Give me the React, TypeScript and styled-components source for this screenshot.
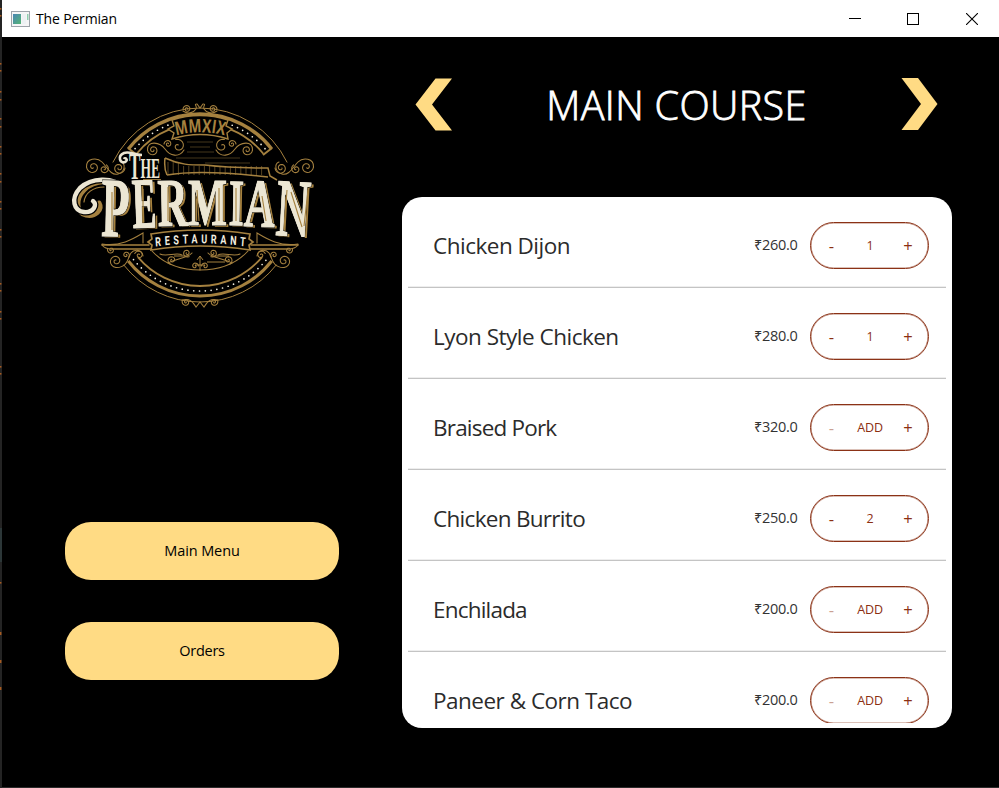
import React, { useState } from "react";
import styled, { createGlobalStyle } from "styled-components";

const GOLD = "#a5813f";
const CREAM = "#ece6d3";

const GlobalStyle = createGlobalStyle`
  html, body, #root { height: 100%; }
  body { margin: 0; background: #000; overflow: hidden; }
  * { box-sizing: border-box; }
  button { font-family: inherit; padding: 0; margin: 0; border: 0; background: none; }
`;

const Desktop = styled.div`
  display: flex;
  width: 999px;
  height: 788px;
  background: #000;
  font-family: "Open Sans", "Noto Sans", sans-serif;
`;

const EditorSliver = styled.div`
  width: 2px;
  flex: none;
  background: #242424;
`;

const Window = styled.div`
  flex: 1;
  display: flex;
  flex-direction: column;
  border-bottom: 1px solid #2b2b2b;
`;

const TitleBar = styled.header`
  height: 37px;
  flex: none;
  display: flex;
  align-items: center;
  padding-left: 9px;
  background: #fff;
`;

const WindowTitle = styled.span`
  flex: 1;
  margin-left: 6px;
  font-size: 14px;
  letter-spacing: -0.16px;
  line-height: 20px;
  color: #000;
`;

const CaptionButtons = styled.div`
  display: flex;
  margin-right: -3px;
`;

const CaptionButton = styled.button`
  width: ${(p: { $w?: number }) => p.$w ?? 58}px;
  height: 36px;
  display: flex;
  align-items: center;
  justify-content: center;
`;

const Body = styled.main`
  flex: 1;
  display: grid;
  grid-template-columns: 337px 550px;
  column-gap: 63px;
`;

const Sidebar = styled.aside`
  display: flex;
  flex-direction: column;
  padding: 61px 0 0 63px;
`;

const LogoBox = styled.div`
  height: 214px;
  margin: 0 0 210px 3px;
`;

const NavButton = styled.button`
  width: 274px;
  height: 58px;
  margin-bottom: 42px;
  padding-bottom: 2px;
  border-radius: 26px;
  background: #ffdb84;
  color: #000;
  font-size: 14.5px;
  letter-spacing: ${(p: { $tracking: number }) => p.$tracking}px;
`;

const Content = styled.section`
  display: flex;
  flex-direction: column;
`;

const CategoryBar = styled.div`
  height: 160px;
  display: flex;
  align-items: flex-start;
  justify-content: space-between;
  padding: 41px 14px 0 13px;
`;

const ArrowButton = styled.button`
  width: 37px;
  height: 53px;
  svg { display: block; }
`;

const Heading = styled.h1`
  margin: 0;
  font-size: 39.5px;
  font-weight: 300;
  line-height: 55px;
  letter-spacing: 0.35px;
  -webkit-text-stroke: 0.8px #fff;
  white-space: nowrap;
  color: #fff;
`;

const Panel = styled.div`
  height: 531px;
  padding: 0 6px 5px;
  border-radius: 20px;
  background: #fff;
`;

const List = styled.ul`
  height: 526px;
  margin: 0;
  padding: 0;
  overflow: hidden;
  list-style: none;
`;

const Row = styled.li`
  height: 91px;
  display: flex;
  align-items: flex-start;
  padding: 25px 17px 0 25px;
  border-bottom: 1px solid #c4c4c4;
  box-shadow: inset 0 -1px 0 #eeeeee;
`;

const DishName = styled.span`
  flex: 1;
  font-size: 22.5px;
  letter-spacing: ${(p: { $tracking: number }) => p.$tracking}px;
  line-height: 48px;
  white-space: nowrap;
  color: #2b2b2b;
`;

const Price = styled.span`
  width: 56px;
  font-size: 14.5px;
  letter-spacing: -0.3px;
  line-height: 45px;
  color: #333;
`;

const Stepper = styled.div`
  width: 119px;
  height: 47px;
  display: grid;
  grid-template-columns: 41px 1fr 40px;
  align-items: center;
  justify-items: center;
  border: 1px solid #8b3216;
  box-shadow: inset 0 0 0 0.6px rgba(139, 50, 22, 0.6);
  border-radius: 23.5px;
  color: #8b2f12;
`;

const StepButton = styled.button`
  width: 30px;
  height: 30px;
  color: inherit;
  font-size: 16.5px;
  line-height: 28px;
  opacity: ${(p: { $dim?: boolean }) => (p.$dim ? 0.45 : 1)};
`;

const Quantity = styled.span`
  font-size: 12.5px;
  letter-spacing: -0.1px;
  line-height: 20px;
`;

/** Volute that winds inward to its centre; dir flips the winding. */
function spiral(cx: number, cy: number, r: number, start: number, turns = 1.5, dir = 1): string {
  const steps = Math.round(turns * 16);
  let d = "";
  for (let i = 0; i <= steps; i++) {
    const t = i / steps;
    const a = ((start + dir * t * turns * 360) * Math.PI) / 180;
    const rr = r * (1 - 0.85 * t);
    d += (i ? "L" : "M") + (cx + rr * Math.cos(a)).toFixed(2) + " " + (cy + rr * Math.sin(a)).toFixed(2);
  }
  return d;
}

function arc(r: number, from: number, to: number): string {
  const p = (deg: number) => {
    const a = (deg * Math.PI) / 180;
    return `${(200 + r * Math.cos(a)).toFixed(2)} ${(205 + r * Math.sin(a)).toFixed(2)}`;
  };
  return `M${p(from)}A${r} ${r} 0 0 1 ${p(to)}`;
}

/** Scrollwork of the left half; the right half reuses it mirrored about x = 200. */
function Scrolls() {
  return (
    <g fill="none" stroke={GOLD} strokeWidth="1.05" strokeLinecap="round">
      <path d={spiral(93, 167, 6.5, 180, 1.3, -1)} />
      <path d="M86.5 167C86 158 97 157 102 162S111 176 118 174S126 164 121 162" />
      <path d={spiral(104, 169, 4.8, -60, 1.4, 1)} />
      <path d={spiral(119, 168, 6, 0, 1.5, 1)} />
      <path d={spiral(153, 150, 5.5, 180, 1.5, -1)} />
      <path d={spiral(168, 144, 4, 180, 1.4, 1)} />
      <path d={spiral(178, 146, 7, 250, 1.1, 1)} />
      <path d="M147.500 150C147 140 160 142 165 149S179 158 184 150" />
      <path d={spiral(187, 109, 4, 180, 1.5, 1)} />
      <path d="M183 111C189 115 194 112 196 109S193 104 197 104L200 108" />
      <path d={spiral(116, 261, 6.5, 90, 1.5, 1)} />
      <path d="M116 267.500C128 268 128 257 131 253S142 249 143 256" />
      <path d={spiral(126, 255, 3.6, 40, 1.3, -1)} />
      <path d={spiral(139, 255, 4.5, 200, 1.3, 1)} />
      <path d={spiral(111, 250, 3.6, 190, 1.3, -1)} />
      <path d={spiral(172, 260, 4.6, 100, 1.4, 1)} />
      <path d={spiral(187, 253, 4.2, 60, 1.4, 1)} />
      <path d="M160 254C166 257 177 252 182 255M168 263C178 258 188 258 192 253" />
      <path d={spiral(186, 302, 4, 200, 1.4, -1)} />
      <path d="M182 300C190 298 193 302 196 307L200 302" />
      <path d={spiral(195, 266, 3.5, 0, 1.2, -1)} />
      <path d="M102 245H149M112 249H151" strokeWidth="1.4" />
      <path d="M102 244C120 247 133 239 143 233V243M102 245C104 248 108 249 112 249" />
      <path d="M152 251C164 264 180 270 200 270" />
    </g>
  );
}

const WORDMARK = [
  { ch: "P", x: 101, y: 236, w: 28, size: 74, rot: 1 },
  { ch: "E", x: 133, y: 228, w: 24, size: 63, rot: -2 },
  { ch: "R", x: 158, y: 226, w: 30, size: 60, rot: -1 },
  { ch: "M", x: 188, y: 225, w: 39, size: 59, rot: 0 },
  { ch: "I", x: 228.5, y: 225, w: 15, size: 58, rot: 1 },
  { ch: "A", x: 243.5, y: 226, w: 31, size: 60, rot: 2 },
  { ch: "N", x: 275, y: 235, w: 34, size: 72, rot: 3 },
];

function Wordmark({ fill, outline, weight, dx }: { fill: string; outline: string; weight: number; dx: number }) {
  return (
    <g
      fill={fill}
      stroke={outline}
      strokeWidth={weight}
      paintOrder="stroke"
      fontFamily="Liberation Serif"
      fontWeight="700"
    >
      {WORDMARK.map((l) => (
        <text
          key={l.ch}
          transform={`translate(${l.x + dx} ${l.y + dx * 0.6}) rotate(${l.rot})`}
          fontSize={l.size * 1.14}
          textLength={l.w}
          lengthAdjust="spacingAndGlyphs"
        >
          {l.ch}
        </text>
      ))}
    </g>
  );
}

const LogoSvg = styled.svg`
  display: block;
  overflow: visible;
`;

function Logo() {
  const railings = Array.from({ length: 19 }, (_, i) => 168 + i * 5.2);
  return (
    <LogoSvg width="256" height="214" viewBox="68 98 256 214" role="img" aria-label="The Permian Restaurant">
      <g fill="none" stroke={GOLD}>
        <path d={arc(97, 206, 334)} strokeWidth="1" />
        <path d={arc(91, 218, 322)} strokeWidth="3.4" />
        <path d={arc(81.5, 219, 248)} strokeWidth="1.8" />
        <path d={arc(81.5, 292, 321)} strokeWidth="1.8" />
        <path d={arc(97, 38, 142)} strokeWidth="1" />
        <path d={arc(91, 38, 142)} strokeWidth="3" />
        <path d={arc(81, 40, 140)} strokeWidth="1.8" />
        <path d="M128 148L137 155M272 148L263 155" strokeWidth="2" />
        <path d="M172 120Q200 111 228 120L226 126L232 129L227 133L228 139Q200 130 172 139L174 133L168 129L174 126Z" strokeWidth="1.4" fill="#000" />
      </g>
      <g fill="none" stroke="#f3efe0" strokeWidth="1.7" strokeLinecap="round">
        <path d={arc(86, 221, 249)} strokeDasharray="0 5.800" />
        <path d={arc(86, 292, 320)} strokeDasharray="0 5.800" />
        <path d={arc(86, 40, 141)} strokeDasharray="0 5.800" />
      </g>
      <path id="banner-curve" d="M176 135.500Q200 129 225 135.500" fill="none" />
      <text fill={GOLD} fontFamily="Open Sans" fontSize="18.500" fontWeight="700">
        <textPath href="#banner-curve" textLength="49" lengthAdjust="spacingAndGlyphs">MMXIX</textPath>
      </text>
      <Scrolls />
      <g transform="translate(400 0) scale(-1 1)">
        <Scrolls />
      </g>
      <g fill="none" stroke={GOLD}>
        <path d="M165 158C164 167 165 171 167 175M165 158C180 165 190 165 205 165C230 168 250 168 268 168L270 176L277 180" strokeWidth="1.5" />
        <path d="M167 175C190 171 225 172 268 177" strokeWidth="1.4" />
        <path d={railings.map((x) => `M${x} ${x < 180 ? 162 : 166}V175`).join("")} strokeWidth="0.7" opacity="0.75" />
        <path d="M187 142H213M190 147H210M187 152H214M176 158H240M205 163H250" strokeWidth="0.7" opacity="0.6" />
        <path d="M200 256V270M197 260L200 256L203 260M195 265H205M174 256H188M211 256H229M207 262H225" strokeWidth="1" />
      </g>
      <Wordmark fill={GOLD} outline="#000" weight={3} dx={2.6} />
      <g fill="none" strokeLinecap="round">
        <path d="M127 189C114 178 94 180 84 190C75 199 76 213 86 215C95 217 103 210 99 203" stroke={GOLD} strokeWidth="5" />
        <path d="M125 188C112 176 91 178 80 188C70 199 74 211 84 212C93 213 98 205 93 201" stroke="#000" strokeWidth="7" />
        <path d="M125 188C112 176 91 178 80 188C70 199 74 211 84 212C93 213 98 205 93 201" stroke={CREAM} strokeWidth="4.4" />
        <path d="M104 187C93 187 85 193 84 202" stroke={GOLD} strokeWidth="1.2" />
      </g>
      <Wordmark fill={CREAM} outline="#000" weight={2.4} dx={0} />
      <Wordmark fill={CREAM} outline={CREAM} weight={1.1} dx={0} />
      <g stroke={GOLD} strokeWidth="1.1" fill="none">
        <path d="M112 192L112 230M143 189V223M168 187V221M197 190L199 221M219 188V221M236 188V221M262 196L266 221M287 190L284 229M291 192L302 227M308 190L304 226" />
      </g>
      <text x="129" y="179" fill={CREAM} fontFamily="Liberation Serif" fontWeight="700" stroke="#000" strokeWidth="1.200" paintOrder="stroke" textLength="31" lengthAdjust="spacingAndGlyphs">
        <tspan fontSize="38">T</tspan><tspan fontSize="30" dy="-1">HE</tspan>
      </text>
      <path d="M142 155C134 155 130 151 124 153C117 156 120 164 125 162C129 160 125 157 124 159" fill="none" stroke={CREAM} strokeWidth="2.600" />
      <path d="M143 179.500H161" stroke={GOLD} strokeWidth="0.9" />
      <path d="M151 234Q200 226 250 234L249 239L253 242L249 245L250 250Q200 242 151 250L152 245L148 242L152 239Z" fill="#000" stroke={GOLD} strokeWidth="1.7" />
      <path id="ribbon-curve" d="M216 246.500Q277.800 240 341.700 246.500" fill="none" />
      <text transform="scale(0.72 1)" fill="#f3efe0" fontFamily="Roboto" fontSize="12.500" fontWeight="700">
        <textPath href="#ribbon-curve" textLength="125">RESTAURANT</textPath>
      </text>
    </LogoSvg>
  );
}

function AppIcon() {
  return (
    <svg width="19" height="16" viewBox="0 0 19 16">
      <defs>
        <linearGradient id="app-screen" x1="0" y1="0" x2="1" y2="1">
          <stop offset="0" stopColor="#4a85b4" />
          <stop offset="1" stopColor="#55b575" />
        </linearGradient>
      </defs>
      <rect x="0.5" y="0.5" width="18" height="15" fill="#f5f5f6" stroke="#9ea3aa" />
      <rect x="2" y="3" width="8" height="10" fill="url(#app-screen)" />
      <rect x="11" y="3" width="4" height="10" fill="#edf1f3" />
      <rect x="16" y="3" width="1.5" height="6" fill="#8fcfae" />
    </svg>
  );
}

const MARKS = [8, 15, 63, 70, 91, 99, 118, 126, 146, 153, 173, 181, 201, 208, 229, 236, 283, 290, 311, 318, 366, 373, 582, 632, 660, 687];

function SliverMarks() {
  return (
    <svg width="2" height="788" viewBox="0 0 2 788" display="block">
      <rect y="528" width="2" height="34" fill="#2c3738" />
      {MARKS.map((y) => (
        <rect key={y} y={y} width="1.4" height={y > 600 ? 3 : 1.6} fill="#a65a20" />
      ))}
    </svg>
  );
}

interface Dish {
  name: string;
  price: string;
  qty: number;
  tracking: number;
}

const DISHES: Dish[] = [
  { name: "Chicken Dijon", price: "₹260.0", qty: 1, tracking: -0.5 },
  { name: "Lyon Style Chicken", price: "₹280.0", qty: 1, tracking: -0.5 },
  { name: "Braised Pork", price: "₹320.0", qty: 0, tracking: -0.8 },
  { name: "Chicken Burrito", price: "₹250.0", qty: 2, tracking: -0.7 },
  { name: "Enchilada", price: "₹200.0", qty: 0, tracking: -0.8 },
  { name: "Paneer & Corn Taco", price: "₹200.0", qty: 0, tracking: -0.5 },
];

function DishRow({ dish }: { dish: Dish }) {
  const [qty, setQty] = useState(dish.qty);
  return (
    <Row>
      <DishName $tracking={dish.tracking}>{dish.name}</DishName>
      <Price>{dish.price}</Price>
      <Stepper>
        <StepButton $dim={qty === 0} onClick={() => setQty(Math.max(0, qty - 1))}>-</StepButton>
        <Quantity>{qty === 0 ? "ADD" : qty}</Quantity>
        <StepButton onClick={() => setQty(qty + 1)}>+</StepButton>
      </Stepper>
    </Row>
  );
}

export default function App() {
  return (
    <>
      <GlobalStyle />
      <Desktop>
        <EditorSliver><SliverMarks /></EditorSliver>
        <Window>
          <TitleBar>
            <AppIcon />
            <WindowTitle>The Permian</WindowTitle>
            <CaptionButtons>
              <CaptionButton aria-label="Minimize">
                <svg width="12" height="12"><path d="M0 5.5H12" stroke="#000" /></svg>
              </CaptionButton>
              <CaptionButton aria-label="Maximize">
                <svg width="12" height="12"><rect x="0.5" y="0.5" width="11" height="11" fill="none" stroke="#000" /></svg>
              </CaptionButton>
              <CaptionButton aria-label="Close" $w={60}>
                <svg width="12" height="12"><path d="M0 0L12 12M12 0L0 12" stroke="#000" strokeWidth="1.1" /></svg>
              </CaptionButton>
            </CaptionButtons>
          </TitleBar>
          <Body>
            <Sidebar>
              <LogoBox><Logo /></LogoBox>
              <NavButton $tracking={-0.1}>Main Menu</NavButton>
              <NavButton $tracking={-0.3}>Orders</NavButton>
            </Sidebar>
            <Content>
              <CategoryBar>
                <ArrowButton aria-label="Previous">
                  <svg width="37" height="53"><path d="M20.5 0.4H37L17 26.5L37 52.6H20.5L0.5 26.5Z" fill="#ffdb84" /></svg>
                </ArrowButton>
                <Heading>MAIN COURSE</Heading>
                <ArrowButton aria-label="Next">
                  <svg width="37" height="53"><path d="M0.5 0H17L36.5 26L17 52H0.5L20 26Z" fill="#ffdb84" /></svg>
                </ArrowButton>
              </CategoryBar>
              <Panel>
                <List>
                  {DISHES.map((d) => <DishRow key={d.name} dish={d} />)}
                </List>
              </Panel>
            </Content>
          </Body>
        </Window>
      </Desktop>
    </>
  );
}
